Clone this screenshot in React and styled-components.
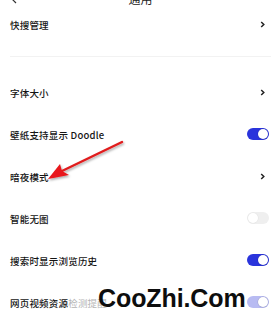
import React from 'react'
import styled, { createGlobalStyle } from 'styled-components'

const Global = createGlobalStyle`
  html, body { margin: 0; padding: 0; background: #fff; }
  body { overflow: hidden; font-family: "Noto Sans CJK SC", "Liberation Sans", sans-serif; }
`

const rows = [
  { name: '字体大小', kind: 'chevron' },
  { name: '壁纸支持显示 Doodle', kind: 'toggle', state: 'on' },
  { name: '暗夜模式', kind: 'chevron' },
  { name: '智能无图', kind: 'toggle', state: 'off' },
  { name: '搜索时显示浏览历史', kind: 'toggle', state: 'on' },
  { name: '网页视频资源', faded: '检测提醒', kind: 'toggle', state: 'faded' },
]

const Chevron = () => (
  <ChevronBox>
    <svg width="5" height="7" viewBox="0 0 5 7">
      <path d="M1.2 1 L3.8 3.5 L1.2 6" fill="none" stroke="#222" strokeWidth="1.5" />
    </svg>
  </ChevronBox>
)

const App = () => {
  return (
    <Page>
      <Global />
      <Header>
        <Back>
          <svg width="8" height="8" viewBox="0 0 8 8">
            <path d="M6 -4 L1 1 L5 5" fill="none" stroke="#333" strokeWidth="1.2" />
          </svg>
        </Back>
        <Title>通用</Title>
      </Header>
      <Row height={36}>
        <Label>快搜管理</Label>
        <Chevron />
      </Row>
      <Divider />
      {rows.map((r) => (
        <Row key={r.name} height={42}>
          <Label>
            {r.name}
            {r.faded && <Faded>{r.faded}</Faded>}
          </Label>
          {r.kind === 'chevron' ? <Chevron /> : <Toggle state={r.state}><Knob state={r.state} /></Toggle>}
        </Row>
      ))}
      <Arrow width="279" height="327" viewBox="0 0 279 327">
        <defs>
          <filter id="sh" x="-20%" y="-20%" width="140%" height="140%">
            <feDropShadow dx="1" dy="1.5" stdDeviation="1.2" floodColor="#000" floodOpacity="0.35" />
          </filter>
        </defs>
        <g filter="url(#sh)">
          <line x1="122" y1="142" x2="62" y2="171" stroke="#e01b1d" strokeWidth="2.4" strokeLinecap="round" />
          <path d="M48 179 L60 164 L62 171 L69 175 Z" fill="#e8161a" />
        </g>
      </Arrow>
      <Watermark>CooZhi.Com</Watermark>
    </Page>
  )
}

export default App

const Page = styled.div`
  position: relative;
  width: 279px;
  height: 327px;
  overflow: hidden;
  background: #fff;
`
const Header = styled.div`
  position: relative;
  height: 6px;
  display: flex;
  justify-content: center;
  align-items: flex-end;
`
const Back = styled.div`
  position: absolute;
  left: 11px;
  top: -2px;
  line-height: 0;
`
const Title = styled.div`
  font-size: 12px;
  line-height: 12px;
  color: #222;
  margin-bottom: 1px;
  margin-left: 2px;
`
const Row = styled.div`
  height: ${(p) => p.height}px;
  display: flex;
  align-items: center;
  justify-content: space-between;
  padding: 0 10px 0 10px;
`
const ChevronBox = styled.span`
  display: flex;
  margin-right: 4px;
`
const Label = styled.div`
  font-size: 9.5px;
  font-weight: 500;
  color: #141414;
  letter-spacing: 0.2px;
  padding-top: 1px;
`
const Faded = styled.span`
  color: #b4b4b4;
  font-weight: 400;
`
const Divider = styled.div`
  height: 29px;
  display: flex;
  align-items: center;
  padding: 0 8px 0 10px;
  &::after {
    content: '';
    flex: 1;
    height: 1px;
    background: #f2f2f2;
  }
`
const trackColors = { on: '#2a34dc', off: '#efefef', faded: '#b8bbf2' }
const Toggle = styled.div`
  width: 22px;
  height: 12px;
  border-radius: 6px;
  background: ${(p) => trackColors[p.state]};
  display: flex;
  align-items: center;
  justify-content: ${(p) => (p.state === 'off' ? 'flex-start' : 'flex-end')};
  padding: 0 1px;
  box-sizing: border-box;
`
const Knob = styled.div`
  width: 10px;
  height: 10px;
  border-radius: 50%;
  background: #fff;
  box-shadow: 0 0 0 0.5px ${(p) => (p.state === 'off' ? '#e4e4e4' : 'rgba(0,0,0,0.15)')};
`
const Arrow = styled.svg`
  position: absolute;
  left: 0;
  top: 0;
  pointer-events: none;
`
const Watermark = styled.div`
  position: absolute;
  left: 98px;
  top: 284px;
  font-family: "Liberation Sans", Arial, sans-serif;
  font-weight: bold;
  font-size: 25px;
  color: #0d0d0d;
  letter-spacing: -0.1px;
`
